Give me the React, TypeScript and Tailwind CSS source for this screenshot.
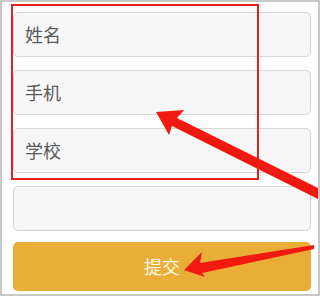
import React from "react";

const fields = ["姓名", "手机", "学校", ""];

export default function App() {
  return (
    <div
      className="relative w-[320px] h-[296px] bg-white border-2 border-[#c8c8c8] overflow-hidden"
      style={{ fontFamily: '"Noto Sans CJK SC", "Noto Sans", sans-serif' }}
    >
      <div className="flex flex-col pl-[11px] pr-[7px] pt-[10px]">
        {fields.map((label, i) => (
          <div
            key={i}
            className="h-[45px] mb-[13px] rounded-[5px] border border-[#d6d6d6] bg-[#f7f7f7] flex items-center pl-[11px] text-[18px] text-[#595959]"
          >
            {label}
          </div>
        ))}
        <div className="h-[49px] -mt-[2px] rounded-[5px] bg-[#e8ae37] flex items-center justify-center text-[18px] text-[#fffbe8]">
          提交
        </div>
      </div>

      {/* annotation box */}
      <div className="absolute left-[9px] top-[2px] w-[248px] h-[176px] border-2 border-[#e8201c] pointer-events-none" />

      {/* annotation arrows */}
      <svg className="absolute left-0 top-0 pointer-events-none" width="320" height="296" viewBox="-2 -2 320 296">
        <polygon points="152,108 180,106 173,114 318,186 318,197 168,122 165,131" fill="#f21a10" />
        <polygon points="180,266 198,248 196,259 310,241 310,245 198,269 201,273" fill="#f21a10" />
      </svg>
    </div>
  );
}
